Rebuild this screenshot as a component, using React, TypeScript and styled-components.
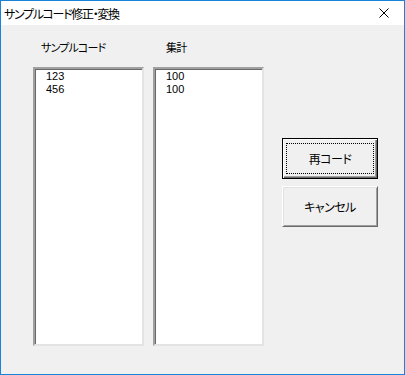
import styled, { createGlobalStyle } from 'styled-components';

const GlobalStyle = createGlobalStyle`
  html, body {
    margin: 0;
    padding: 0;
    background: #f0f0f0;
  }
`;

const jpFont = `"Noto Sans CJK JP", "Noto Sans", sans-serif`;

const Window = styled.div`
  width: 405px;
  height: 375px;
  box-sizing: border-box;
  border: 1px solid #1883d7;
  background: #f0f0f0;
  display: flex;
  flex-direction: column;
  overflow: hidden;
`;

const TitleBar = styled.div`
  height: 24px;
  background: #ffffff;
  display: flex;
  align-items: center;
  justify-content: space-between;
  padding-left: 3px;
  font-family: ${jpFont};
  font-size: 12px;
  letter-spacing: -1.3px;
  font-feature-settings: "palt";
  color: #000;
`;

const CloseBtn = styled.div`
  width: 40px;
  height: 24px;
  display: flex;
  align-items: center;
  justify-content: center;
`;

const Body = styled.div`
  flex: 1;
  display: flex;
  padding-left: 32px;
`;

const Column = styled.div`
  display: flex;
  flex-direction: column;
  padding-top: 15px;
  margin-right: 9px;
`;

const Label = styled.div<{ $indent: number }>`
  height: 27px;
  padding-left: ${p => p.$indent}px;
  font-family: ${jpFont};
  font-size: 11px;
  line-height: 15px;
  letter-spacing: -0.8px;
  font-feature-settings: "palt";
  color: #000;
`;

const ListBox = styled.div`
  width: 111px;
  height: 279px;
  box-sizing: border-box;
  background: #fff;
  border-style: solid;
  border-width: 2px;
  border-color: #a0a0a0 #e3e3e3 #e3e3e3 #a0a0a0;
  box-shadow: inset 1px 1px 0 #696969, inset -1px -1px 0 #ffffff;
  padding: 1px 0 0 11px;
  font-family: "Liberation Sans Narrow", "Liberation Sans", sans-serif;
  font-size: 11px;
  color: #000;
`;

const ListItem = styled.div`
  height: 13px;
  line-height: 13px;
`;

const ButtonColumn = styled.div`
  display: flex;
  flex-direction: column;
  gap: 7px;
  padding-top: 113px;
  margin-left: 9px;
`;

const Button = styled.div<{ $default?: boolean }>`
  position: relative;
  width: 96px;
  height: 41px;
  box-sizing: border-box;
  display: flex;
  align-items: center;
  justify-content: center;
  background: #f0f0f0;
  font-family: ${jpFont};
  font-size: 12px;
  letter-spacing: -0.5px;
  font-feature-settings: "palt";
  color: #000;
  border: 1px solid ${p => (p.$default ? '#000' : '#ffffff')};
  border-right-color: ${p => (p.$default ? '#000' : '#696969')};
  border-bottom-color: ${p => (p.$default ? '#000' : '#696969')};
  box-shadow: ${p =>
    p.$default
      ? 'inset 1px 1px 0 #ffffff, inset -1px -1px 0 #696969, inset -2px -2px 0 #a0a0a0'
      : 'inset 1px 1px 0 #e3e3e3, inset -1px -1px 0 #a0a0a0'};
`;

const FocusRing = styled.div`
  position: absolute;
  left: 3px;
  top: 4px;
  right: 3px;
  bottom: 4px;
  border: 1px dotted #000;
  pointer-events: none;
`;

const codes = ['123', '456'];
const totals = ['100', '100'];

const App = () => {
  return (
    <>
      <GlobalStyle />
      <Window>
        <TitleBar>
          <span>サンプルコード修正・変換</span>
          <CloseBtn>
            <svg width="10" height="10" viewBox="0 0 10 10">
              <path d="M0.5 0.5 L9.5 9.5 M9.5 0.5 L0.5 9.5" stroke="#000" strokeWidth="1" fill="none" />
            </svg>
          </CloseBtn>
        </TitleBar>
        <Body>
          <Column>
            <Label $indent={8}>サンプルコード</Label>
            <ListBox>
              {codes.map((c, i) => <ListItem key={i}>{c}</ListItem>)}
            </ListBox>
          </Column>
          <Column>
            <Label $indent={13}>集計</Label>
            <ListBox>
              {totals.map((t, i) => <ListItem key={i}>{t}</ListItem>)}
            </ListBox>
          </Column>
          <ButtonColumn>
            <Button $default>
              再コード
              <FocusRing />
            </Button>
            <Button>キャンセル</Button>
          </ButtonColumn>
        </Body>
      </Window>
    </>
  );
};

export default App;
